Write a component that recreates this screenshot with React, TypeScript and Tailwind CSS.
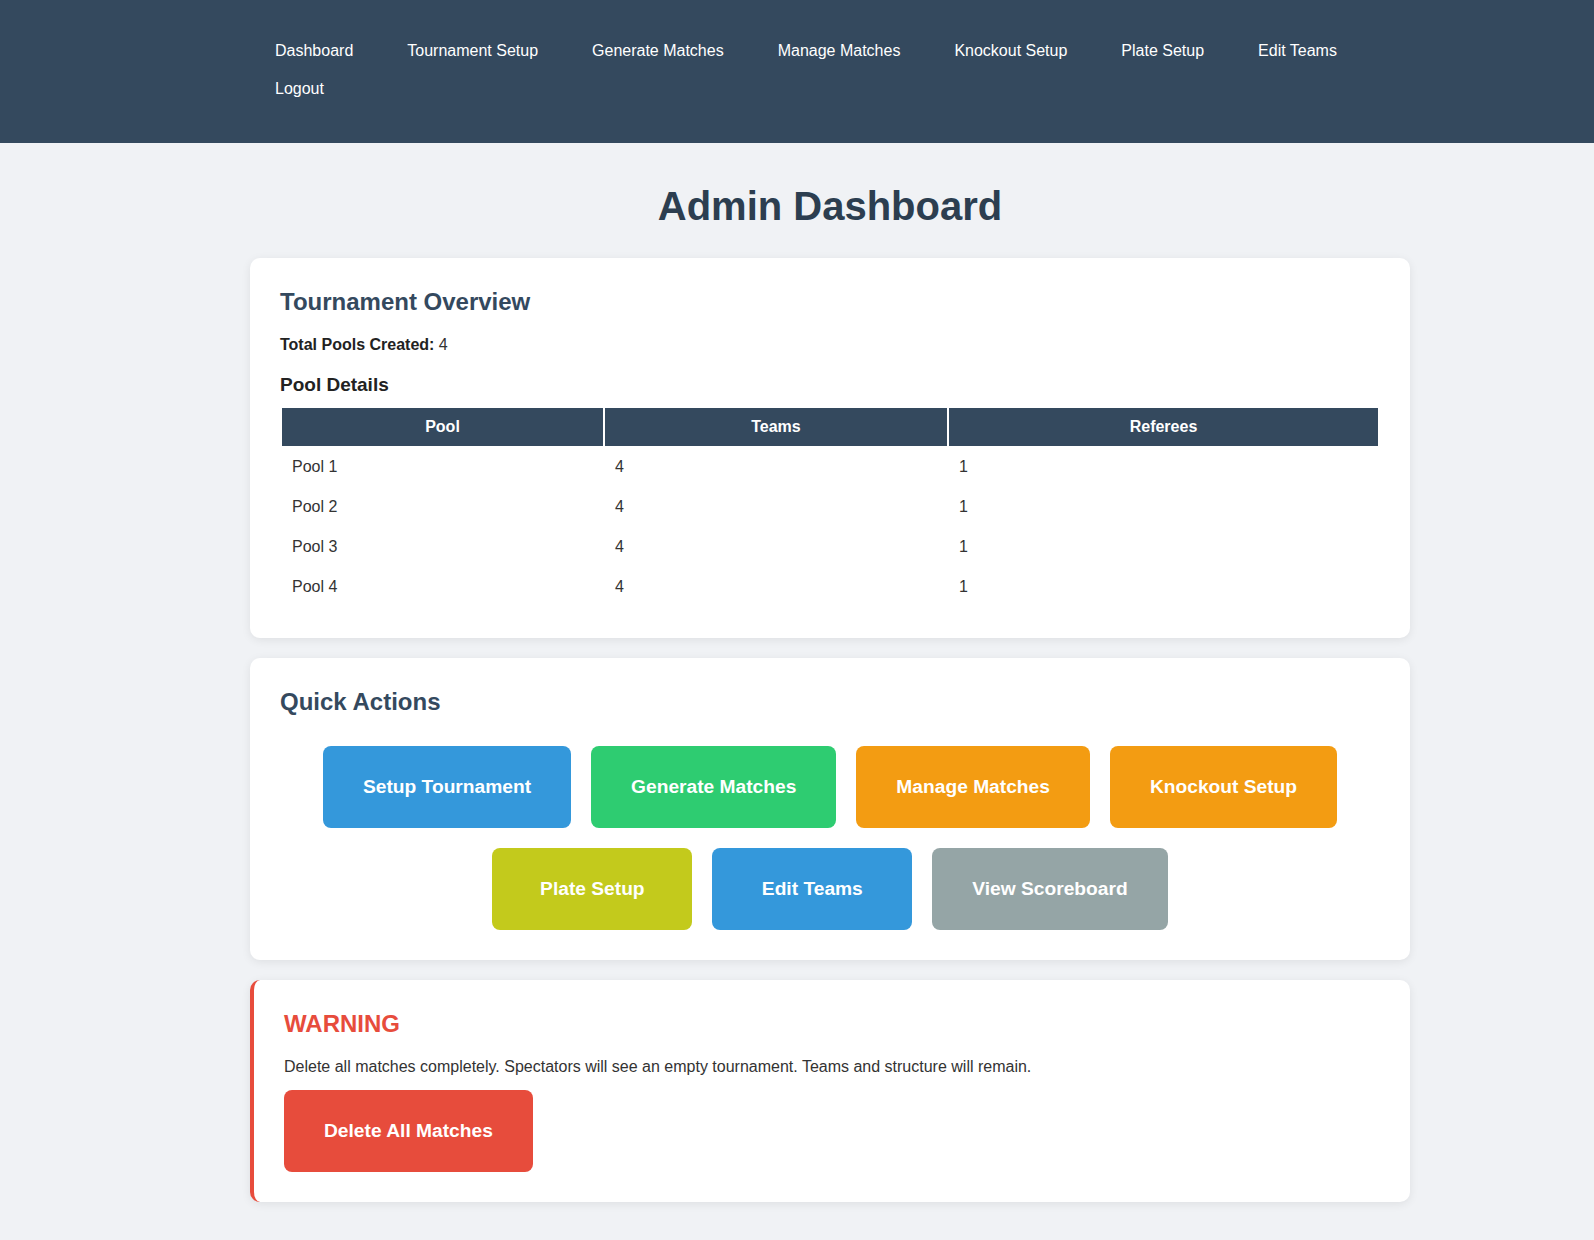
import React from 'react';

const navLinks = [
  'Dashboard',
  'Tournament Setup',
  'Generate Matches',
  'Manage Matches',
  'Knockout Setup',
  'Plate Setup',
  'Edit Teams',
  'Logout',
];

const pools = [
  { name: 'Pool 1', teams: 4, referees: 1 },
  { name: 'Pool 2', teams: 4, referees: 1 },
  { name: 'Pool 3', teams: 4, referees: 1 },
  { name: 'Pool 4', teams: 4, referees: 1 },
];

const actions = [
  { label: 'Setup Tournament', color: 'bg-[#3498db]' },
  { label: 'Generate Matches', color: 'bg-[#2ecc71]' },
  { label: 'Manage Matches', color: 'bg-[#f39c12]' },
  { label: 'Knockout Setup', color: 'bg-[#f39c12]' },
  { label: 'Plate Setup', color: 'bg-[#c3ca1c]' },
  { label: 'Edit Teams', color: 'bg-[#3498db]' },
  { label: 'View Scoreboard', color: 'bg-[#95a5a6]' },
];

export default function App() {
  return (
    <div className="min-h-[1240px] bg-[#f0f2f5] text-[#333] font-['Liberation_Sans',Arial,sans-serif]">
      <header className="bg-[#34495e] pt-[32px] pb-[35px]">
        <nav className="ml-[250px] w-[1160px] px-[25px] flex flex-wrap gap-x-[54px]">
          {navLinks.map((link) => (
            <a key={link} href="#" className="py-[10px] text-[16px] leading-[18px] text-white">
              {link}
            </a>
          ))}
        </nav>
      </header>

      <main className="ml-[250px] w-[1160px] pt-[40px] pb-[37px]">
        <h1 className="text-center text-[40px] leading-[46px] font-bold text-[#2c3e50] mb-[29px]">
          Admin Dashboard
        </h1>

        <section className="bg-white rounded-[10px] shadow-[0_2px_10px_rgba(0,0,0,0.08)] p-[30px]">
          <h2 className="text-[24px] leading-[28px] font-bold text-[#34495e] mb-[20px]">
            Tournament Overview
          </h2>
          <p className="text-[16px] leading-[18px]">
            <strong className="text-[#222]">Total Pools Created:</strong> 4
          </p>
          <h3 className="mt-[20px] text-[19px] leading-[22px] font-bold text-[#222] mb-[10px]">
            Pool Details
          </h3>
          <table className="w-full border-separate border-spacing-[2px] text-[16px]">
            <thead>
              <tr className="bg-[#34495e] text-white">
                <th className="w-[321px] p-[10px] leading-[18px] font-bold">Pool</th>
                <th className="w-[342px] p-[10px] leading-[18px] font-bold">Teams</th>
                <th className="p-[10px] leading-[18px] font-bold">Referees</th>
              </tr>
            </thead>
            <tbody>
              {pools.map((pool) => (
                <tr key={pool.name}>
                  <td className="p-[10px] leading-[18px]">{pool.name}</td>
                  <td className="p-[10px] leading-[18px]">{pool.teams}</td>
                  <td className="p-[10px] leading-[18px]">{pool.referees}</td>
                </tr>
              ))}
            </tbody>
          </table>
        </section>

        <section className="mt-[20px] bg-white rounded-[10px] shadow-[0_2px_10px_rgba(0,0,0,0.08)] p-[30px]">
          <h2 className="text-[24px] leading-[28px] font-bold text-[#34495e] mb-[30px]">
            Quick Actions
          </h2>
          <div className="flex flex-wrap justify-center gap-[20px]">
            {actions.map((action) => (
              <button
                key={action.label}
                className={`${action.color} min-w-[200px] rounded-[8px] px-[40px] py-[30px] text-[19.2px] leading-[22px] font-bold text-white`}
              >
                {action.label}
              </button>
            ))}
          </div>
        </section>

        <section className="mt-[20px] bg-white rounded-[10px] border-l-4 border-[#e74c3c] shadow-[0_2px_10px_rgba(0,0,0,0.08)] p-[30px]">
          <h2 className="text-[24px] leading-[28px] font-bold text-[#e74c3c] mb-[20px]">WARNING</h2>
          <p className="text-[16px] leading-[18px] mb-[14px]">
            Delete all matches completely. Spectators will see an empty tournament. Teams and structure will remain.
          </p>
          <button className="bg-[#e74c3c] min-w-[200px] rounded-[8px] px-[40px] py-[30px] text-[19.2px] leading-[22px] font-bold text-white">
            Delete All Matches
          </button>
        </section>
      </main>
    </div>
  );
}
